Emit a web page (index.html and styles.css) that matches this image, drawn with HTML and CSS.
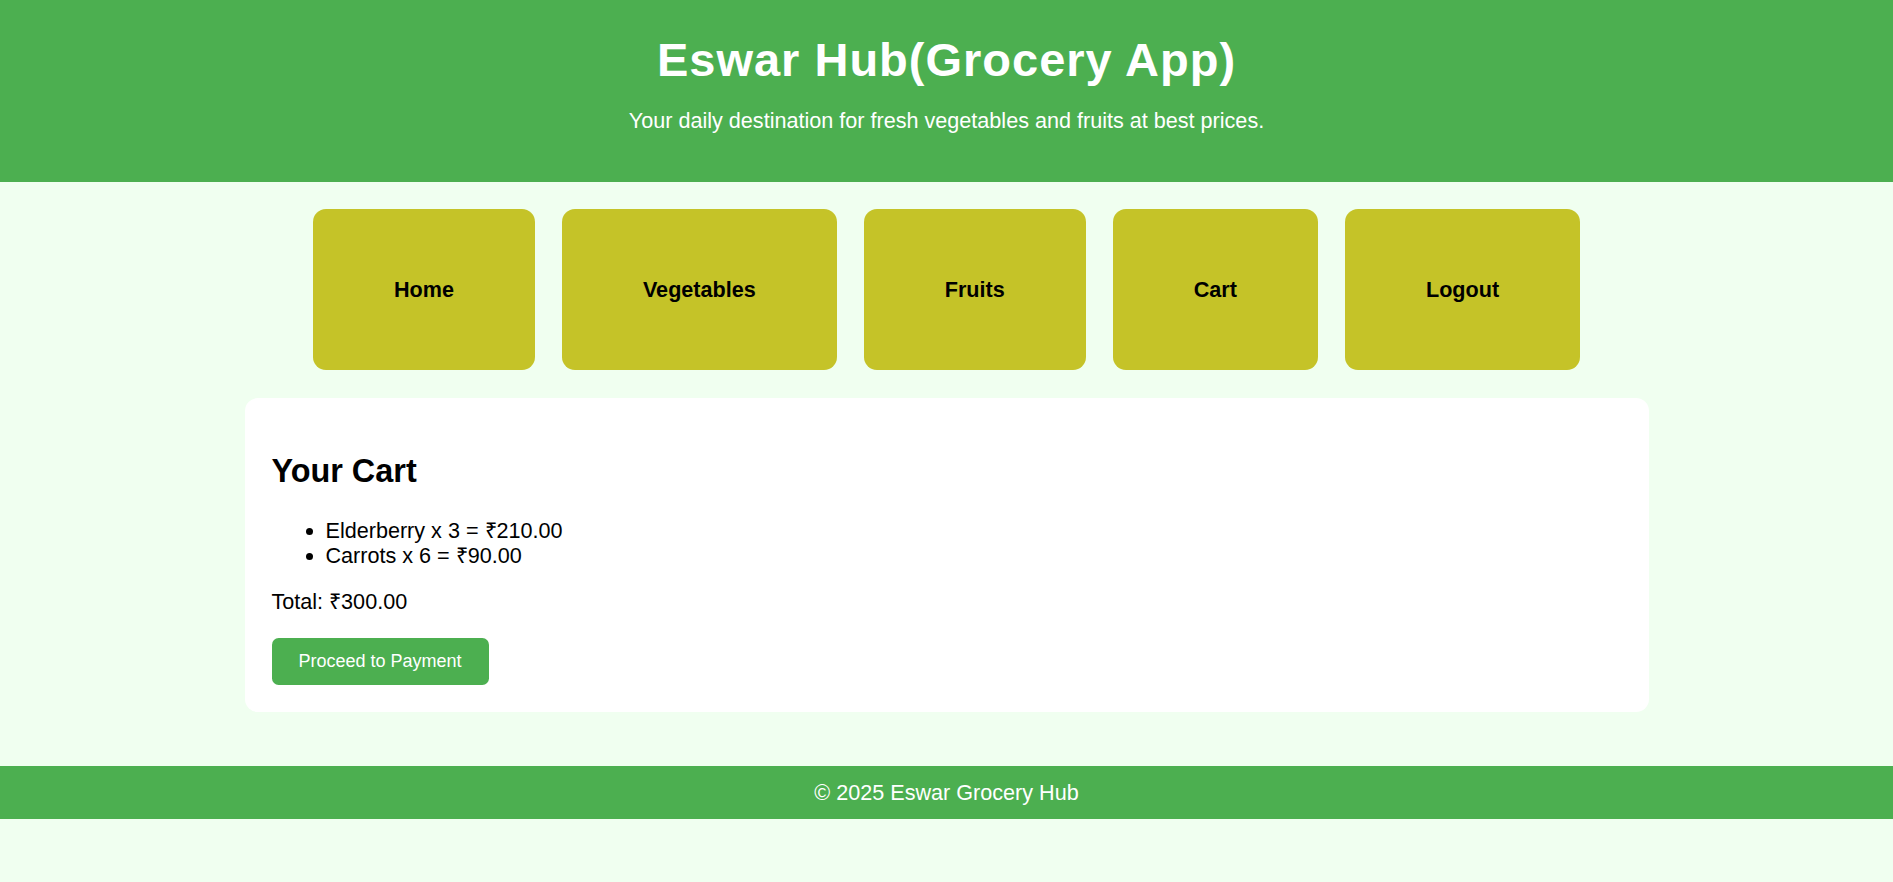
FILE: index.html
```html
<!DOCTYPE html>
<html lang="en">
<head>
<meta charset="utf-8">
<title>Eswar Hub(Grocery App)</title>
<link rel="stylesheet" href="styles.css">
</head>
<body>
<header class="site-header">
  <h1 class="site-title">Eswar Hub(Grocery App)</h1>
  <p class="site-tagline">Your daily destination for fresh vegetables and fruits at best prices.</p>
</header>
<nav class="main-nav">
  <a class="nav-btn" href="#">Home</a>
  <a class="nav-btn" href="#">Vegetables</a>
  <a class="nav-btn" href="#">Fruits</a>
  <a class="nav-btn" href="#">Cart</a>
  <a class="nav-btn" href="#">Logout</a>
</nav>
<main class="cart-card">
  <h2 class="cart-title">Your Cart</h2>
  <ul class="cart-list">
    <li>Elderberry x 3 = ₹210.00</li>
    <li>Carrots x 6 = ₹90.00</li>
  </ul>
  <p class="cart-total">Total: ₹300.00</p>
  <button class="pay-btn" type="button">Proceed to Payment</button>
</main>
<footer class="site-footer">© 2025 Eswar Grocery Hub</footer>
</body>
</html>
```
FILE: styles.css
```css
html, body {
  margin: 0;
  padding: 0;
}
body {
  background: #f0fff0;
  font-family: "Liberation Sans", Arial, sans-serif;
  font-size: 21.6px;
  line-height: 25px;
  color: #000;
}
.site-header {
  background: #4caf50;
  color: #fff;
  text-align: center;
  padding: 34px 0 49px;
}
.site-title {
  margin: 0;
  font-size: 47px;
  line-height: 52px;
  font-weight: bold;
  letter-spacing: 1px;
}
.site-tagline {
  margin: 22px 0 0;
  line-height: 25px;
}
.main-nav {
  display: flex;
  justify-content: center;
  gap: 27px;
  margin-top: 27px;
}
.nav-btn {
  display: block;
  background: #c5c328;
  color: #000;
  text-decoration: none;
  font-weight: bold;
  line-height: 25px;
  padding: 68px 81px;
  border-radius: 13px;
}
.cart-card {
  width: 1350px;
  margin: 28px auto 54px;
  padding: 27px;
  background: #fff;
  border-radius: 13px;
}
.cart-title {
  font-size: 32.4px;
  line-height: 37px;
  margin: 27.5px 0 28px;
}
.cart-list {
  margin: 0 0 21.5px;
  padding-left: 54px;
}
.cart-total {
  margin: 0 0 24px;
}
.pay-btn {
  display: block;
  background: #4caf50;
  color: #fff;
  border: none;
  border-radius: 6.67px;
  font-family: "Liberation Sans", Arial, sans-serif;
  font-size: 18px;
  line-height: 20.5px;
  padding: 13.33px 27px;
}
.site-footer {
  background: #4caf50;
  color: #fff;
  text-align: center;
  padding: 14px 0;
}
```
